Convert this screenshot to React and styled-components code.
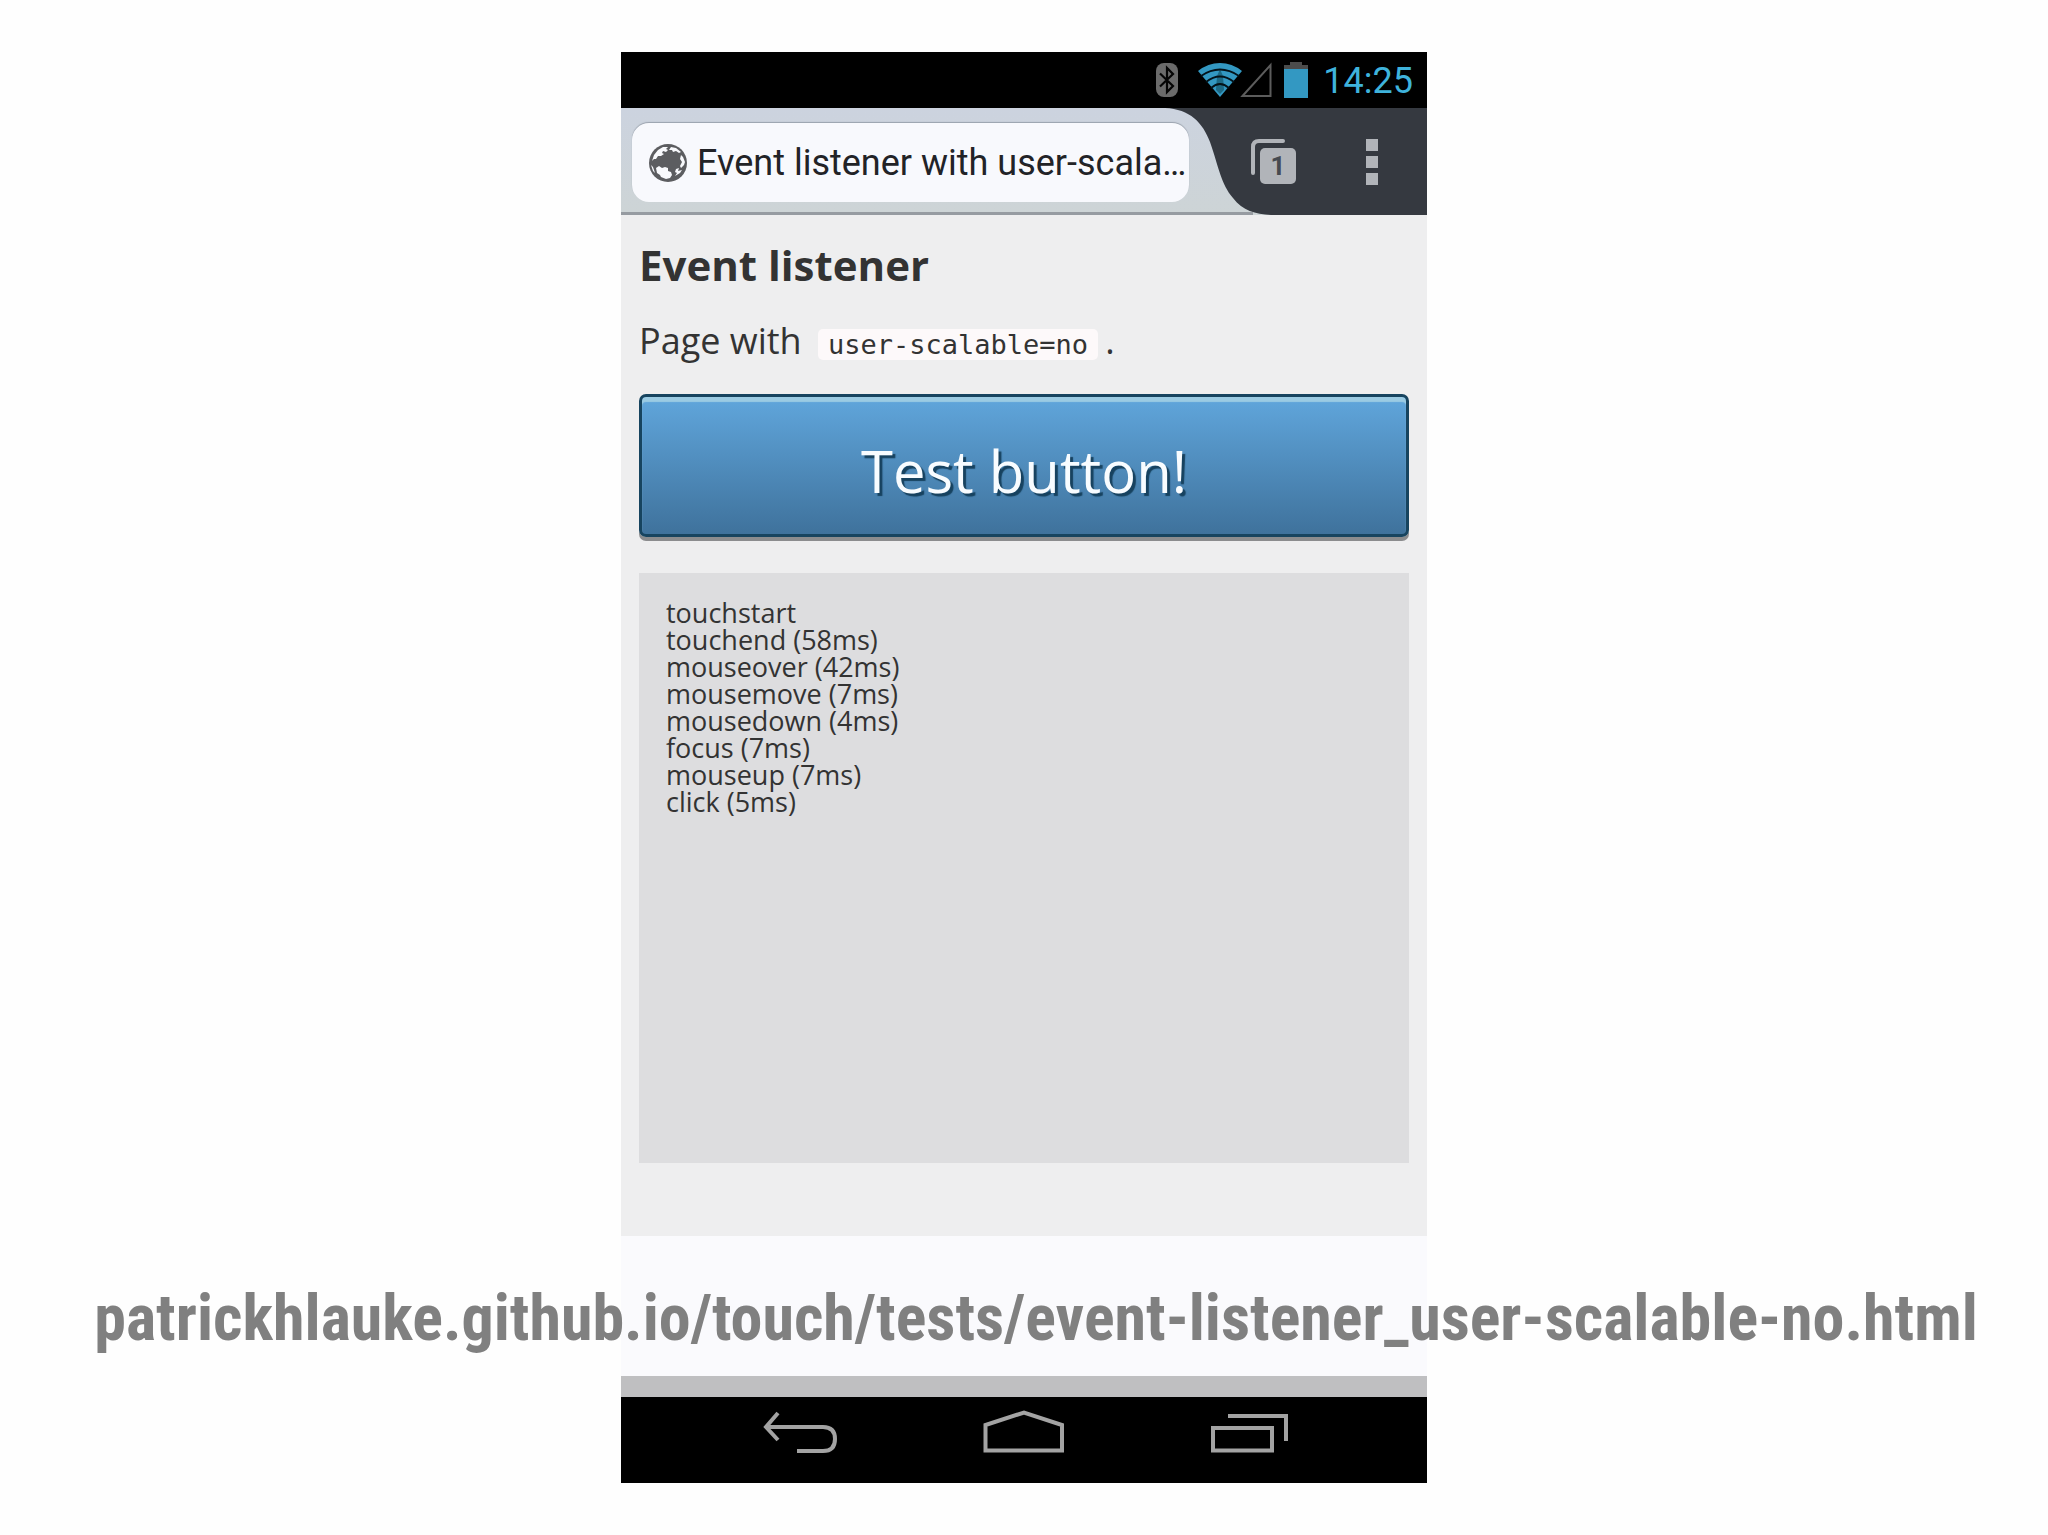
import React from 'react';
import styled, { createGlobalStyle } from 'styled-components';

const events = [
  'touchstart',
  'touchend (58ms)',
  'mouseover (42ms)',
  'mousemove (7ms)',
  'mousedown (4ms)',
  'focus (7ms)',
  'mouseup (7ms)',
  'click (5ms)',
];

const BluetoothIcon = () => (
  <svg width="22" height="34" viewBox="0 0 22 34" aria-hidden="true">
    <rect width="22" height="34" rx="8" fill="#6b6b6b" />
    <path d="M4 10.5 L17 23 L11 29 V5 L17 11 L4 23.5" fill="none" stroke="#050505" strokeWidth="2.2" />
  </svg>
);

const WifiIcon = () => (
  <svg width="44" height="34" viewBox="0 0 44 34" aria-hidden="true">
    <path d="M22 34 L0 8 Q10 0 22 0 T44 8 Z" fill="#3398c2" />
    <path d="M22 6 L25 13 L26 27 L22 31 L18 27 L19 13 Z" fill="#1d6a85" />
    <g fill="none" stroke="#04131a" strokeWidth="1.8">
      <path d="M3 13 Q22 0 41 13" />
      <path d="M8 19 Q22 8 36 19" />
      <path d="M13 25 Q22 17 31 25" />
    </g>
  </svg>
);

const SignalIcon = () => (
  <svg width="32" height="36" viewBox="0 0 32 36" aria-hidden="true">
    <path d="M2.5 34 L30.5 3 V34 Z" fill="none" stroke="#5c5c5c" strokeWidth="2" />
  </svg>
);

const BatteryIcon = () => (
  <svg width="24" height="36" viewBox="0 0 24 36" aria-hidden="true">
    <path d="M0 3 H6 V0 H18 V3 H24 V8 H0 Z" fill="#4c4c4c" />
    <rect y="7" width="24" height="29" fill="#3398c2" />
  </svg>
);

const GlobeIcon = () => (
  <svg width="38" height="38" viewBox="0 0 38 38" aria-hidden="true">
    <circle cx="19" cy="19" r="19" fill="#5c5d60" />
    <g fill="#f8f9fc">
      <path d="M3 17 L5 11 L9 6 L14 3 L19 3 L17 5 L19 6 L17 8 L14 7 L13 9 L15 10 L12 12 L9 12 L7 15 L5 15 Z" />
      <path d="M22 3 L27 4 L32 8 L30 9 L27 7 L24 8 L23 6 L20 6 Z" />
      <path d="M32 11 L34 13 L36 18 L35 21 L32 24 L31 22 L33 18 L31 15 Z" />
      <path d="M7 24 L10 22 L13 24 L16 23 L19 24 L19 27 L22 28 L23 31 L21 34 L17 35 L12 33 L11 31 L8 29 Z" />
      <path d="M27 25 L30 24 L29 27 L33 26 L31 29 L26 32 L28 29 L26 28 Z" />
      <path d="M2 21 L4 23 L6 29 L4 27 Z" />
    </g>
  </svg>
);

const TabsIcon = () => (
  <svg width="46" height="46" viewBox="0 0 46 46" aria-hidden="true">
    <path d="M2 34 V8 Q2 2 8 2 H32" fill="none" stroke="#b1b4b9" strokeWidth="4" strokeLinecap="round" />
    <rect x="9" y="9" width="36" height="36" rx="5" fill="#b1b4b9" />
  </svg>
);

const MenuIcon = () => (
  <svg width="12" height="46" viewBox="0 0 12 46" fill="#b1b4b9" aria-hidden="true">
    <rect width="12" height="12" />
    <rect y="17" width="12" height="12" />
    <rect y="34" width="12" height="12" />
  </svg>
);

const BackIcon = () => (
  <svg width="76" height="44" viewBox="0 0 76 44" fill="none" stroke="#a3a3a3" strokeWidth="4" aria-hidden="true">
    <path d="M16 3 L4 17 L16 30" />
    <path d="M4 17 H61 Q73 17 73 29 T61 41 H35" />
  </svg>
);

const HomeIcon = () => (
  <svg width="82" height="44" viewBox="0 0 82 44" fill="none" stroke="#a3a3a3" strokeWidth="4" aria-hidden="true">
    <path d="M2.5 40.5 V15 L41 2.5 L79 15 V40.5 Z" />
  </svg>
);

const RecentsIcon = () => (
  <svg width="78" height="44" viewBox="0 0 78 44" fill="none" stroke="#a3a3a3" strokeWidth="4" aria-hidden="true">
    <path d="M18 6 H76 V31" />
    <rect x="3" y="18" width="59" height="22.5" />
  </svg>
);

const App = () => {
  return (
    <>
      <GlobalStyle />
      <Slide>
        <Phone>
          <StatusBar>
            <BluetoothIcon />
            <WifiGroup>
              <WifiIcon />
              <SignalIcon />
            </WifiGroup>
            <BatteryIcon />
            <Clock>14:25</Clock>
          </StatusBar>
          <Toolbar>
            <TabArea>
              <AddressBar>
                <GlobeIcon />
                <AddressInput aria-label="Address" defaultValue="Event listener with user-scala…" />
              </AddressBar>
            </TabArea>
            <TabCurve width="106" height="107" viewBox="0 0 106 107" aria-hidden="true">
              <path d="M0 105.5 H88" stroke="#969ba1" strokeWidth="3" />
              <path d="M0 0 C25 1 38 15 45 34 C54 60 56 76 68 90 C78 103 90 106 106 107 V0 Z" fill="#353940" />
            </TabCurve>
            <ToolbarActions>
              <TabsButton aria-label="Open tabs">
                <TabsIcon />
                <TabCount>1</TabCount>
              </TabsButton>
              <ToolbarButton aria-label="Menu">
                <MenuIcon />
              </ToolbarButton>
            </ToolbarActions>
          </Toolbar>
          <Page>
            <Title>Event listener</Title>
            <Intro>
              Page with <Code>user-scalable=no</Code>.
            </Intro>
            <TestButton>Test button!</TestButton>
            <Log>
              {events.map((event) => (
                <li key={event}>{event}</li>
              ))}
            </Log>
          </Page>
          <PageEnd />
          <Strip />
          <NavBar>
            <NavButton aria-label="Back">
              <BackIcon />
            </NavButton>
            <NavButton aria-label="Home">
              <HomeIcon />
            </NavButton>
            <NavButton aria-label="Recent apps">
              <RecentsIcon />
            </NavButton>
          </NavBar>
        </Phone>
        <Caption href="https://patrickhlauke.github.io/touch/tests/event-listener_user-scalable-no.html">
          patrickhlauke.github.io/touch/tests/event-listener_user-scalable-no.html
        </Caption>
      </Slide>
    </>
  );
};

// Styled Components
const GlobalStyle = createGlobalStyle`
  * {
    box-sizing: border-box;
  }

  body {
    margin: 0;
    background-color: #fefefe;
    font-family: 'Open Sans', 'Noto Sans', sans-serif;
    color: #333;
  }

  button {
    padding: 0;
    border: 0;
    background: none;
    font: inherit;
    cursor: pointer;
  }

  svg {
    display: block;
    flex-shrink: 0;
  }
`;

const Slide = styled.main`
  position: relative;
  display: flex;
  justify-content: center;
  padding: 52px 0;
`;

const Phone = styled.section`
  width: 100%;
  max-width: 806px;
`;

const StatusBar = styled.div`
  display: flex;
  align-items: center;
  justify-content: flex-end;
  height: 56px;
  padding-right: 14px;
  background-color: #000;
`;

const WifiGroup = styled.div`
  display: flex;
  align-items: center;
  margin: 0 12px 0 20px;

  /* The signal triangle tucks in beside the wifi fan */
  svg + svg {
    margin-left: -2px;
  }
`;

const Clock = styled.time`
  margin-left: 15px;
  padding-top: 2px;
  font-family: Roboto, sans-serif;
  font-size: 36px;
  line-height: 54px;
  color: #3fb3dc;
`;

const Toolbar = styled.header`
  display: flex;
  height: 107px;
  background-color: #ccd3da;
`;

const TabArea = styled.div`
  flex: 1;
  min-width: 0;
  padding: 15px 0 10px 11px;
  border-bottom: 3px solid #969ba1;
  background: linear-gradient(#ccd3df, #cdd4d6);
`;

const AddressBar = styled.label`
  position: relative;
  z-index: 1;
  display: flex;
  align-items: center;
  gap: 10px;
  width: calc(100% + 24px);  /* Runs in under the start of the curve */
  height: 79px;
  padding-left: 17px;
  border-radius: 17px;
  background-color: #f8f9fd;
  box-shadow: 0 -1px 1px #9aa2ad;
`;

const AddressInput = styled.input`
  flex: 1;
  min-width: 0;
  padding: 0;
  border: 0;
  outline: 0;
  background: none;
  font-family: Roboto, sans-serif;
  font-size: 36px;
  color: #222327;
`;

const TabCurve = styled.svg`
  background: linear-gradient(#ccd3df, #cdd4d6);
`;

const ToolbarActions = styled.div`
  display: flex;
  align-items: center;
  justify-content: flex-end;
  gap: 69px;
  width: 156px;
  padding-right: 49px;
  background-color: #353940;
`;

const ToolbarButton = styled.button`
  flex-shrink: 0;
`;

const TabsButton = styled(ToolbarButton)`
  position: relative;
`;

const TabCount = styled.span`
  position: absolute;
  top: 9px;
  left: 9px;
  width: 36px;
  font-family: Roboto, sans-serif;
  font-size: 26px;
  font-weight: 700;
  line-height: 36px;
  text-align: center;
  color: #464a50;
`;

const Page = styled.article`
  display: flex;
  flex-direction: column;
  padding: 26px 18px 73px;
  background-color: #eeeeef;
`;

const Title = styled.h1`
  margin: 0 0 28px;
  font-size: 42px;
  line-height: 48px;
`;

const Intro = styled.p`
  margin: 0 0 25px;
  font-size: 36px;
  line-height: 48px;
`;

const Code = styled.code`
  margin: 0 7px;
  padding: 0 10px;
  border-radius: 5px;
  background-color: #fdf9fa;
  font-family: 'DejaVu Sans Mono', monospace;
  font-size: 27px;
`;

const TestButton = styled.button`
  && {
    height: 143px;
    padding-top: 10px;
    border: 3px solid #17445f;
    border-radius: 7px;
    background: linear-gradient(#60a6dc, #3f729c);
    box-shadow: inset 0 5px 1px #9bcbe3, 0 4px 0 #8b8c8e;
    font-size: 58px;
    line-height: 80px;
    color: #f8fcff;
    text-shadow: 3px 3px 1px #17425f;
  }
`;

const Log = styled.ul`
  min-height: 590px;
  margin: 36px 0 0;
  padding: 26px 27px;
  background-color: #dddddf;
  font-size: 27px;
  line-height: 27px;
  list-style: none;
`;

const PageEnd = styled.div`
  height: 140px;
  background-color: #fafafd;
`;

const Strip = styled.div`
  height: 21px;
  background-color: #bfbfc1;
`;

const NavBar = styled.nav`
  display: flex;
  justify-content: space-between;
  height: 86px;
  padding: 13px 139px 0 141px;
  background-color: #000;
`;

const NavButton = styled.button`
  height: 44px;
`;

/* The caption lies across the phone and the slide on both sides of it */
const Caption = styled.a`
  position: absolute;
  right: 0;
  bottom: 180px;
  left: 24px;
  font-family: 'Roboto Condensed', 'Liberation Sans Narrow', 'Liberation Sans', sans-serif;
  font-size: 64px;
  font-weight: 700;
  line-height: 72px;
  text-align: center;
  text-decoration: none;
  white-space: nowrap;
  color: #808080;
`;

export default App;
